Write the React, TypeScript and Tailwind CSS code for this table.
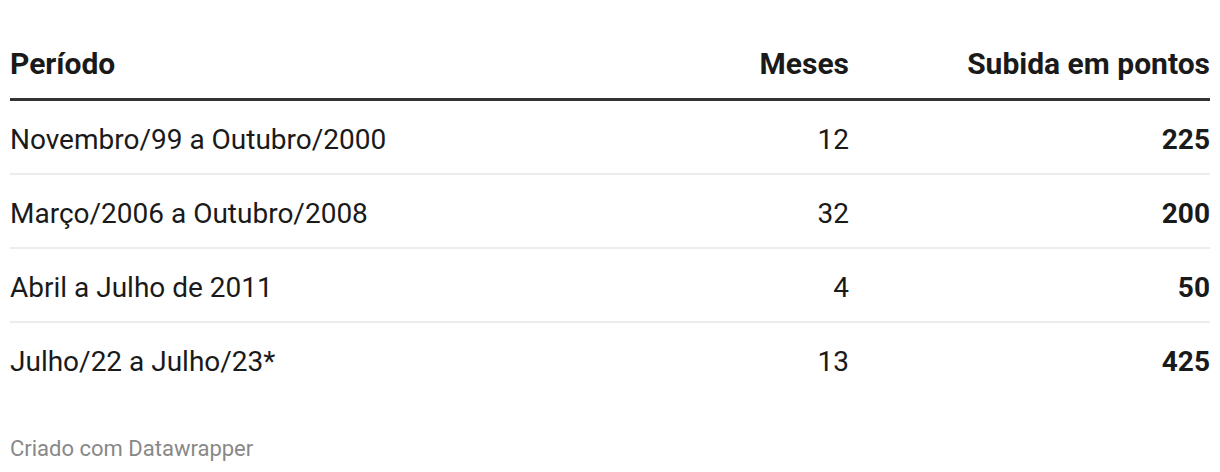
import React from "react";

const rows = [
  ["Novembro/99 a Outubro/2000", "12", "225"],
  ["Março/2006 a Outubro/2008", "32", "200"],
  ["Abril a Julho de 2011", "4", "50"],
  ["Julho/22 a Julho/23*", "13", "425"],
];

export default function App() {
  return (
    <div className="w-[1220px] h-[472px] bg-white px-[10px] text-[#1a1a1a]" style={{ fontFamily: "Roboto, 'Noto Sans', sans-serif" }}>
      <div className="flex items-end h-[101px] pb-[19px] border-b-[3px] border-[#333333] text-[30px] font-bold leading-none">
        <div className="flex-1">Período</div>
        <div className="w-[200px] text-right">Meses</div>
        <div className="w-[361px] text-right">Subida em pontos</div>
      </div>
      {rows.map((r, i) => (
        <div
          key={i}
          className={`flex items-start h-[74px] pt-[25px] text-[28px] leading-none ${i < rows.length - 1 ? "border-b-2 border-[#ececec]" : ""}`}
        >
          <div className="flex-1">{r[0]}</div>
          <div className="w-[200px] text-right">{r[1]}</div>
          <div className="w-[361px] text-right font-bold">{r[2]}</div>
        </div>
      ))}
      <div className="pt-[41px] text-[22px] leading-none text-[#888888]">Criado com Datawrapper</div>
    </div>
  );
}
